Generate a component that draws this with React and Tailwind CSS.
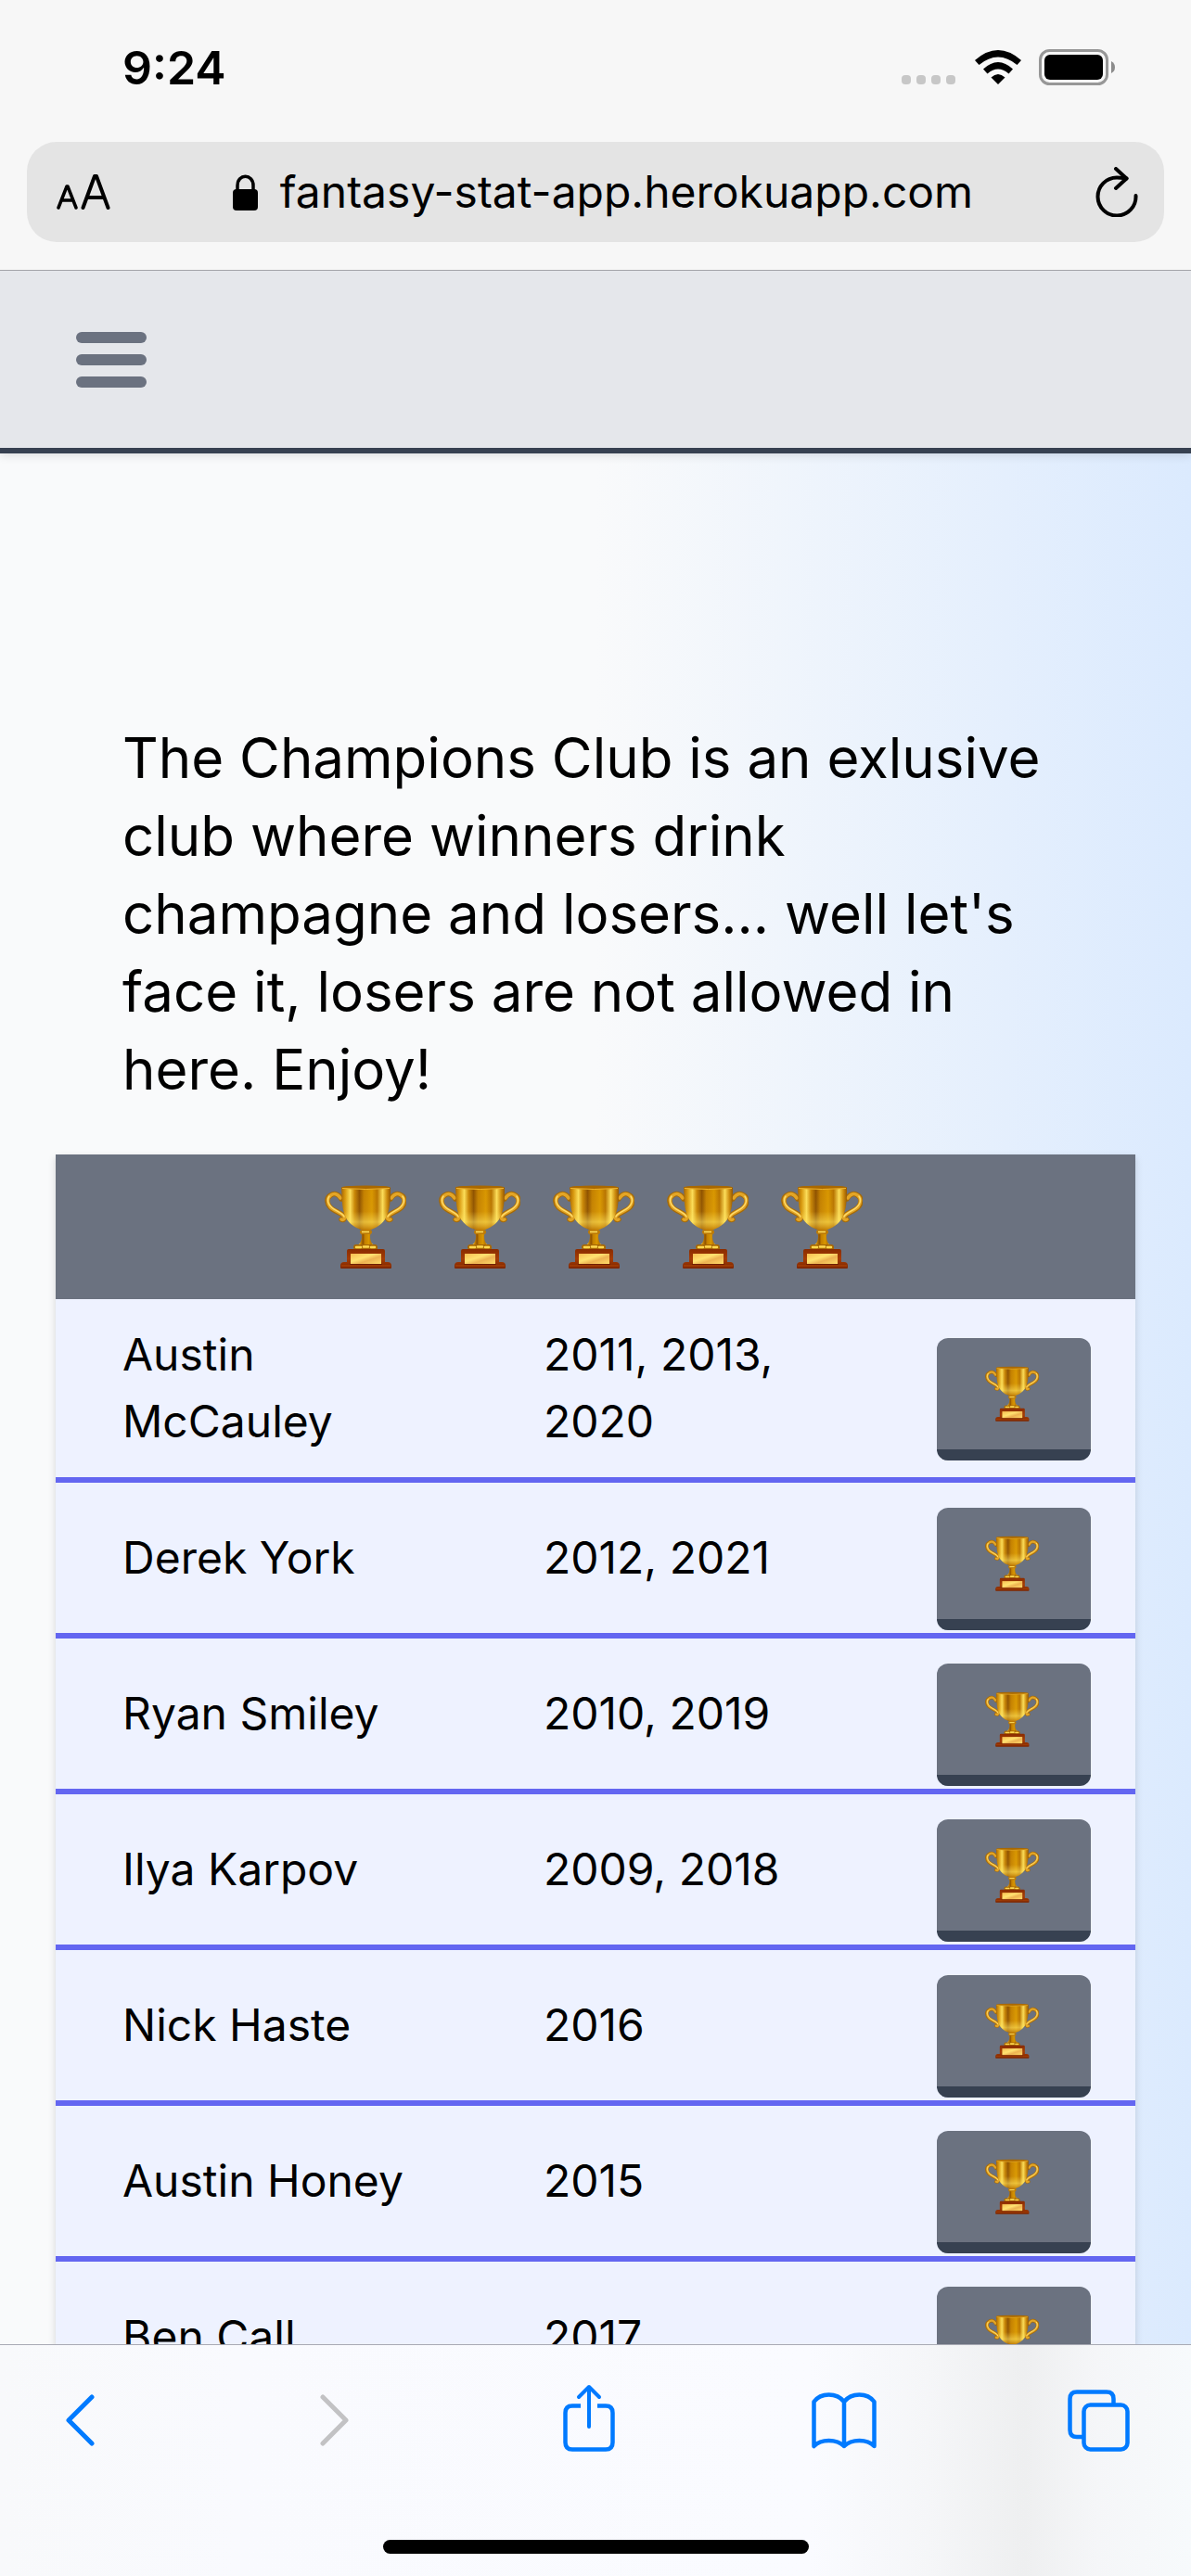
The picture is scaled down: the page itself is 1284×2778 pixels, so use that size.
import React from "react";

const champions = [
  { name: "Austin McCauley", years: "2011, 2013, 2020" },
  { name: "Derek York", years: "2012, 2021" },
  { name: "Ryan Smiley", years: "2010, 2019" },
  { name: "Ilya Karpov", years: "2009, 2018" },
  { name: "Nick Haste", years: "2016" },
  { name: "Austin Honey", years: "2015" },
  { name: "Ben Call", years: "2017" },
];

function TrophyDefs() {
  return (
    <svg className="absolute h-0 w-0" aria-hidden="true">
      <defs>
        <linearGradient id="bowl" x1="0" x2="1" y1="0" y2="0">
          <stop offset="0" stopColor="#a86500" />
          <stop offset="0.08" stopColor="#d8980e" />
          <stop offset="0.18" stopColor="#fbdc58" />
          <stop offset="0.27" stopColor="#c98606" />
          <stop offset="0.37" stopColor="#8f5200" />
          <stop offset="0.46" stopColor="#c48000" />
          <stop offset="0.62" stopColor="#d89600" />
          <stop offset="0.73" stopColor="#b87400" />
          <stop offset="0.84" stopColor="#fbdc58" />
          <stop offset="0.93" stopColor="#cc8a0c" />
          <stop offset="1" stopColor="#945600" />
        </linearGradient>
        <linearGradient id="glow" x1="0" x2="0" y1="0" y2="1">
          <stop offset="0" stopColor="#ffe766" stopOpacity="0" />
          <stop offset="0.55" stopColor="#ffe766" stopOpacity="0.05" />
          <stop offset="0.8" stopColor="#ffe766" stopOpacity="0.55" />
          <stop offset="1" stopColor="#b87000" stopOpacity="0.7" />
        </linearGradient>
        <linearGradient id="wood" x1="0" x2="0" y1="0" y2="1">
          <stop offset="0" stopColor="#8a2c00" />
          <stop offset="0.5" stopColor="#a43c04" />
          <stop offset="1" stopColor="#7e2600" />
        </linearGradient>
        <linearGradient id="plate" x1="0" x2="1" y1="0" y2="1">
          <stop offset="0" stopColor="#f6bd50" />
          <stop offset="0.4" stopColor="#ffe270" />
          <stop offset="0.62" stopColor="#eeb352" />
          <stop offset="1" stopColor="#ffdc68" />
        </linearGradient>
      </defs>
    </svg>
  );
}

function Trophy({ className }) {
  return (
    <svg viewBox="6 5 88 90" className={className} role="img" aria-label="Trophy">
      <g fill="none" strokeLinecap="round" strokeLinejoin="round">
        <path d="M24 20C21 14 16 13.500 12.500 16C7 19 8.500 25 12 29C16 33.500 25 35 27 39C28 42 26 43 24 42" stroke="#a56a08" strokeWidth="5.500" />
        <path d="M23 19C20 14 16 13.500 12.500 16C8 19 9 25 12 28.500C16 33 25 35 27 39C28 42 26 43 24 42" stroke="#e3a526" strokeWidth="3.500" />
        <path d="M11 17C8 21 10 26 14 29.500C18 33 25 35 27 39" stroke="#ffdc6a" strokeWidth="1.500" />
        <path d="M77 20C80 14 85 13.500 88.500 16C94 19 92.500 25 89 29C85 33.500 76 35 74 39C73 42 75 43 77 42" stroke="#a56a08" strokeWidth="5.500" />
        <path d="M78 19C81 14 85 13.500 88.500 16C93 19 92 25 89 28.500C85 33 76 35 74 39C73 42 75 43 77 42" stroke="#e3a526" strokeWidth="3.500" />
        <path d="M90 17C93 21 91 26 87 29.500C83 33 76 35 74 39" stroke="#ffdc6a" strokeWidth="1.500" />
      </g>
      <path d="M45 54H56L55 60C55 66 57 69 63 72V75H38V72C44 69 46 66 46 60Z" fill="url(#bowl)" />
      <rect x="44" y="53" width="13" height="5" rx="2.500" fill="#bd7b08" />
      <path d="M46 55.500H54" stroke="#ffdf5c" strokeWidth="1.500" />
      <rect x="37" y="69" width="26" height="6" rx="3" fill="#a76806" />
      <path d="M40 72H45M48 71.500H53M56 72H60" stroke="#ffd84e" strokeWidth="2.500" strokeLinecap="round" />
      <path d="M24 8C24 6 77 6 77 8C77 20 77 32 71 42C66 49 59 53 50.500 54C42 53 35 49 30 42C24 32 25 20 24 8Z" fill="url(#bowl)" />
      <path d="M25 8H76C77 20 76 32 71 42C66 49 59 53 50.500 54C42 53 35 49 30 42C24 32 25 20 25 8Z" fill="url(#glow)" />
      <ellipse cx="50.500" cy="7.500" rx="26.500" ry="2" fill="#a96800" />
      <path d="M25 8.500Q50 10.500 76 8.500" fill="none" stroke="#eeb42e" strokeWidth="1" />
      <path d="M30 76Q30 74 32 74H69Q71 74 71 76V88H74Q78 88 78 92V94Q78 95 77 95H24Q23 95 23 94V92Q23 88 27 88H30Z" fill="url(#wood)" />
      <path d="M24 92H77" stroke="#b04708" strokeWidth="1" />
      <rect x="34" y="79" width="33" height="11" fill="url(#plate)" />
      <path d="M33 90.500H68" stroke="#6f2000" strokeWidth="1" />
    </svg>
  );
}

function StatusBar() {
  return (
    <div className="flex h-[153px] items-start justify-between pl-[132px] pr-20">
      <time className="mt-[42px] text-[50px] font-semibold leading-[62px]">9:24</time>
      <div className="mt-[53px] flex h-[39px] items-center">
        <svg viewBox="0 0 60 39" className="h-[39px] w-[60px]" role="img" aria-label="No signal" fill="#c7c7c7">
          {[0, 16, 32, 48].map((x) => (
            <rect key={x} x={x} y="28" width="10" height="10" rx="4" />
          ))}
        </svg>
        <svg viewBox="0 0 50 37" className="ml-[19px] h-[37px] w-[50px]" role="img" aria-label="Wi-Fi">
          <path d="M0 11Q25 -11 50 11L45.500 16Q25 -1 4.500 16Z" />
          <path d="M9 20.500Q25 5.500 41 20.500L36.500 25.500Q25 15.500 13.500 25.500Z" />
          <path d="M17.500 29.500Q25 22.500 32.500 29.500L25 37Z" />
        </svg>
        <svg viewBox="0 0 84 39" className="ml-[19px] h-[39px] w-[84px]" role="img" aria-label="Battery full">
          <rect x="1.500" y="1.500" width="72" height="36" rx="10" fill="none" stroke="#979797" strokeWidth="3" />
          <rect x="6" y="6" width="63" height="27" rx="6" />
          <path d="M78 13Q82 15 82 19.500Q82 24 78 26Z" fill="#8c8c8c" />
        </svg>
      </div>
    </div>
  );
}

function AddressBar() {
  return (
    <div className="mx-[29px] mb-[30px] flex h-[108px] items-center justify-between rounded-[32px] bg-[#e4e4e4] pl-8 pr-7">
      <button type="button" aria-label="Page settings">
        <svg viewBox="0 0 58 38" className="h-[38px] w-[58px]" fill="none" stroke="#000" strokeWidth="4" strokeLinecap="round" strokeLinejoin="round">
          <path d="M2 36L11 13H12L21 36M5.500 28H17.500" strokeWidth="3.500" />
          <path d="M28.500 36L41 2H43L55.500 36M33 25H51" />
        </svg>
      </button>
      <div className="flex items-center gap-6">
        <svg viewBox="0 0 27 39" className="h-[39px] w-[27px]" role="img" aria-label="Secure">
          <path d="M5 18V12C5 -1 22 -1 22 12V18" fill="none" stroke="#000" strokeWidth="3.500" />
          <rect y="16" width="27" height="23" rx="4" />
        </svg>
        <span className="text-[48px] leading-[60px]">fantasy-stat-app.herokuapp.com</span>
      </div>
      <button type="button" aria-label="Reload">
        <svg viewBox="0 0 46 54" className="h-[54px] w-[46px]" fill="none" stroke="#000" strokeWidth="4" strokeLinecap="round" strokeLinejoin="round">
          <path d="M43.500 31A20.500 20.500 0 1 1 23 11.500C27 11.500 30 12 33.500 12.500" />
          <path d="M22 2L33.500 12.500L22 23" />
        </svg>
      </button>
    </div>
  );
}

function TrophyButton({ name }) {
  return (
    <button
      type="button"
      aria-label={`Show titles of ${name}`}
      className="mt-6 flex h-[132px] w-full items-center justify-center rounded-xl border-b-[12px] border-[#374151] bg-[#6b7280] pr-1"
    >
      <Trophy className="h-[60px] w-[58px]" />
    </button>
  );
}

function ChampionsTable() {
  return (
    <table className="w-full table-fixed border-collapse bg-[#eef2ff] text-[48px] leading-[72px] shadow-[0_3px_9px_rgba(0,0,0,0.1),0_3px_6px_rgba(0,0,0,0.06)]">
      <colgroup>
        <col className="w-[39%]" />
        <col className="w-[38.5%]" />
        <col className="w-[22.5%]" />
      </colgroup>
      <thead>
        <tr className="bg-[#6b7280]">
          <th colSpan={3} className="h-[156px] p-0">
            <div className="flex items-center justify-center gap-[35px] pr-1">
              {[0, 1, 2, 3, 4].map((i) => (
                <Trophy key={i} className="h-[90px] w-[88px]" />
              ))}
            </div>
          </th>
        </tr>
      </thead>
      <tbody>
        {champions.map(({ name, years }) => (
          <tr key={name} className="h-[168px] border-b-[6px] border-[#6366f1]">
            <td className="px-[72px] py-6">{name}</td>
            <td className="px-[72px] py-6">{years}</td>
            <td className="px-12 py-0">
              <TrophyButton name={name} />
            </td>
          </tr>
        ))}
      </tbody>
    </table>
  );
}

const iconProps = {
  fill: "none",
  stroke: "#007aff",
  strokeWidth: 4.5,
  strokeLinecap: "round",
  strokeLinejoin: "round",
};

function ToolbarButton({ label, disabled, children }) {
  return (
    <button type="button" aria-label={label} disabled={disabled} className="flex w-20 justify-center">
      {children}
    </button>
  );
}

function Toolbar() {
  return (
    <footer className="shrink-0 border-t border-[#a9aab4] bg-[linear-gradient(90deg,#f8f9fb_0%,#f9fafe_20%,#fafbff_68%,#f5f6f8_78%,#eeeff0_86%,#f5f6f8_92%,#f7fafc_100%)]">
      <nav aria-label="Browser" className="flex h-[210px] items-start justify-between pl-[46px] pr-[60px] pt-[42px]">
        <ToolbarButton label="Back">
          <svg viewBox="0 0 32 74" className="h-[74px] w-8" {...iconProps} strokeWidth="5">
            <path d="M29 14L4 39L29 64" />
          </svg>
        </ToolbarButton>
        <ToolbarButton label="Forward" disabled>
          <svg viewBox="0 0 32 74" className="h-[74px] w-8" {...iconProps} stroke="#c2c2c4" strokeWidth="5">
            <path d="M3 14L28 39L3 64" />
          </svg>
        </ToolbarButton>
        <ToolbarButton label="Share">
          <svg viewBox="0 0 56 74" className="h-[74px] w-14" {...iconProps}>
            <path d="M19 23.500H10Q2.500 23.500 2.500 31V63Q2.500 70.500 10 70.500H46Q53.500 70.500 53.500 63V31Q53.500 23.500 46 23.500H37" strokeLinecap="butt" />
            <path d="M28 46V3M17 14L28 3L39 14" strokeWidth="4" />
          </svg>
        </ToolbarButton>
        <ToolbarButton label="Bookmarks">
          <svg viewBox="0 0 70 74" className="h-[74px] w-[70px]" {...iconProps}>
            <path d="M2.500 67V19C10 9 27 9 35 19C43 9 60 9 67.500 19V67C60 59 43 59 35 67C27 59 10 59 2.500 67ZM35 19V67" />
          </svg>
        </ToolbarButton>
        <ToolbarButton label="Tabs">
          <svg viewBox="0 0 67 74" className="h-[74px] w-[67px]" {...iconProps}>
            <path d="M16 57H10Q2.500 57 2.500 49.500V16Q2.500 8.500 10 8.500H42Q49.500 8.500 49.500 16V22" strokeLinecap="butt" />
            <rect x="17.500" y="22.500" width="47" height="48" rx="7" />
          </svg>
        </ToolbarButton>
      </nav>
      <div className="mx-auto mb-6 h-[15px] w-[459px] rounded-full bg-black" />
    </footer>
  );
}

export default function App() {
  return (
    <div className="flex h-screen flex-col overflow-hidden bg-[#f7f7f7] font-['Inter',sans-serif] text-black">
      <TrophyDefs />
      <header className="shrink-0 border-b border-[#a3a3a8]">
        <StatusBar />
        <AddressBar />
      </header>
      <div className="min-h-0 flex-1 overflow-y-auto bg-[linear-gradient(90deg,#f9fafb_0%,#f9fafb_50%,#dbeafe_100%)] [scrollbar-width:none]">
        <nav aria-label="Site" className="flex h-[197px] items-center border-b-[6px] border-[#374151] bg-[#e5e7eb] px-[82px] shadow-[0_3px_9px_rgba(0,0,0,0.1)]">
          <button type="button" aria-label="Open menu" className="flex w-[76px] flex-col gap-3">
            <span className="h-3 rounded-md bg-[#6b7280]" />
            <span className="h-3 rounded-md bg-[#6b7280]" />
            <span className="h-3 rounded-md bg-[#6b7280]" />
          </button>
        </nav>
        <main className="px-[60px] pt-[286px]">
          <p className="mb-[50px] px-[72px] text-[60px] leading-[84px]">
            The Champions Club is an exlusive club where winners drink champagne and losers... well let's face it, losers are not allowed in here. Enjoy!
          </p>
          <ChampionsTable />
        </main>
      </div>
      <Toolbar />
    </div>
  );
}
